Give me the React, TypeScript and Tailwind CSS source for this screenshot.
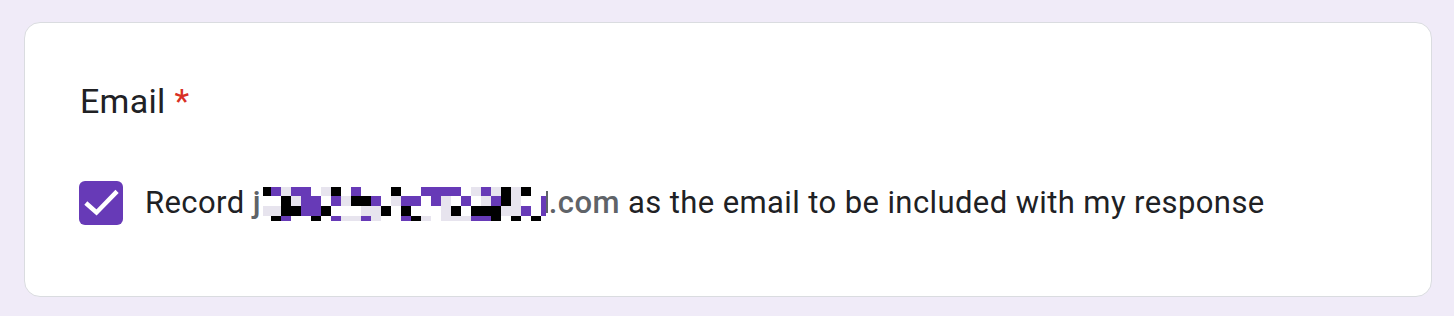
import React from "react";

const ROWS = [
  "KPLPPWLKWPWWWKWWPPPPWLPLKLKWW",
  "WWKLPPWPLKKPWLPPWPLWPWLPKLWWP",
  "LLKKPPKWWWLLKWKWWWLKWKKKLLPWP",
  "WKPWWKWPLLPLWWPKLWLLLPPKWKWKW",
];
const COLW = [8, ...Array(27).fill(10), 5];
const ROWH = [9, 10, 10, 5];
const COLORS: Record<string, string> = {
  K: "bg-[#000000]",
  P: "bg-[#673ab7]",
  L: "bg-[#e7e4ee]",
  W: "bg-[#ffffff]",
};

function Mosaic() {
  return (
    <span className="inline-block overflow-hidden align-[-8px] ml-[2px]">
      <span
        className="grid"
        style={{
          gridTemplateColumns: COLW.map((w) => `${w}px`).join(" "),
          gridTemplateRows: ROWH.map((h) => `${h}px`).join(" "),
        }}
      >
        {ROWS.flatMap((row, r) =>
          row.split("").map((c, k) => <span key={`${r}-${k}`} className={COLORS[c]} />)
        )}
      </span>
    </span>
  );
}

export default function App() {
  return (
    <div
      className="w-[1454px] h-[316px] bg-[#f0ebf8] pt-[22px] pl-[24px]"
      style={{ fontFamily: "Roboto, 'Liberation Sans', sans-serif" }}
    >
      <div className="w-[1408px] h-[275px] bg-white border border-[#dadce0] rounded-[16px] pt-[57px] pl-[54px]">
        <div className="text-[34px] leading-[42px] text-[#202124] tracking-[0.3px] pl-[1px]">
          Email <span className="text-[#d93025]">*</span>
        </div>
        <div className="mt-[59px] flex items-start">
          <div className="w-[44px] h-[44px] rounded-[6px] bg-[#673ab7] flex items-center justify-center shrink-0">
            <svg width="44" height="44" viewBox="0 0 44 44">
              <path
                d="M8.5 23.5 L17.5 31.5 L36.5 12"
                fill="none"
                stroke="#ffffff"
                strokeWidth="4.5"
                strokeLinecap="square"
              />
            </svg>
          </div>
          <div className="ml-[22px] text-[31px] leading-[44px] text-[#202124] tracking-[0.4px] whitespace-nowrap">
            Record{" "}
            <span className="font-medium text-[#5f6368]">
              j
              <Mosaic />
              <span className="inline-block w-[2px] h-[22px] bg-[#5f6368] align-[0px] mr-[1px]" />
              .com
            </span>{" "}
            as the email to be included with my response
          </div>
        </div>
      </div>
    </div>
  );
}
